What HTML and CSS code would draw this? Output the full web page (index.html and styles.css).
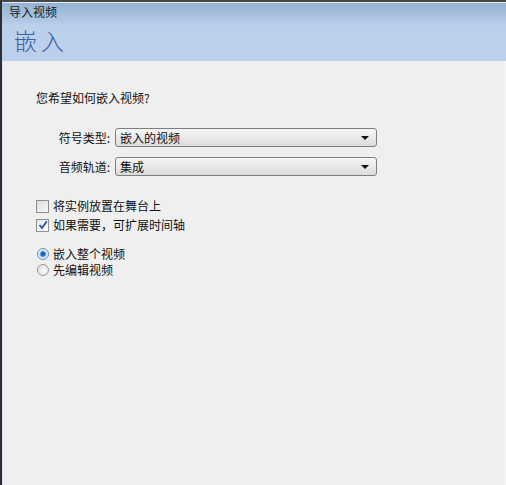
FILE: index.html
```html
<!DOCTYPE html>
<html lang="zh-CN">
<head>
<meta charset="utf-8">
<link rel="stylesheet" href="styles.css">
</head>
<body>
<div class="window">
  <div class="header">
    <div class="wintitle">导入视频</div>
    <div class="heading">嵌入</div>
  </div>
  <div class="content">
    <div class="question">您希望如何嵌入视频?</div>
    <div class="fields">
      <div class="field">
        <span class="label">符号类型:</span>
        <div class="select"><span>嵌入的视频</span><span class="arrow"></span></div>
      </div>
      <div class="field">
        <span class="label">音频轨道:</span>
        <div class="select"><span>集成</span><span class="arrow"></span></div>
      </div>
    </div>
    <div class="checks">
      <div class="opt"><span class="cb"></span><span>将实例放置在舞台上</span></div>
      <div class="opt"><span class="cb checked"><svg width="10" height="10" viewBox="0 0 10 10"><path d="M1.5 5 L4 8 L8.8 1.2" fill="none" stroke="#2a4fb8" stroke-width="1.8"/></svg></span><span>如果需要，可扩展时间轴</span></div>
    </div>
    <div class="radios">
      <div class="opt"><span class="rb on"></span><span>嵌入整个视频</span></div>
      <div class="opt"><span class="rb"></span><span>先编辑视频</span></div>
    </div>
  </div>
</div>
</body>
</html>
```

FILE: styles.css
```css
html, body { margin: 0; padding: 0; }
body {
  font-family: "Noto Sans CJK SC", "Noto Sans", sans-serif;
  font-size: 12px;
  color: #111;
  background: #efefef;
}
.window {
  width: 506px;
  height: 485px;
  box-sizing: border-box;
  border-top: 2px solid #474747;
  border-left: 2px solid #2e2e2e;
  background: #efefef;
  display: flex;
  flex-direction: column;
}
.header {
  height: 59px;
  box-sizing: border-box;
  border-top: 1px solid #e6ecf4;
  background: linear-gradient(#96b2d2 0px, #b3c9e5 19px, #bccfeb 22px, #bccfeb 100%);
  padding-left: 7px;
}
.wintitle {
  font-size: 12px;
  line-height: 16px;
  margin-top: 1px;
  color: #1a1a1a;
}
.heading {
  font-size: 23px;
  font-weight: 300;
  line-height: 30px;
  margin-top: 5px;
  margin-left: 5px;
  color: #3c62a4;
  letter-spacing: 4px;
}
.content {
  flex: 1;
  border-left: 1px solid #d6e2f2;
  border-right: 1px solid #fafafa;
  padding-left: 33px;
  padding-top: 29px;
}
.question { line-height: 16px; }
.fields {
  margin-top: 22px;
  margin-left: 16px;
  display: flex;
  flex-direction: column;
  gap: 10px;
}
.field { display: flex; align-items: center; gap: 5px; }
.label { width: 58px; text-align: right; line-height: 16px; }
.select {
  width: 262px;
  height: 19px;
  box-sizing: border-box;
  border: 1px solid #7f7f7f;
  border-radius: 3px;
  background: linear-gradient(#f6f6f6, #dcdcdc);
  display: flex;
  align-items: center;
  justify-content: space-between;
  padding: 0 7px 0 4px;
  line-height: 16px;
}
.arrow {
  width: 0; height: 0;
  border-left: 4px solid transparent;
  border-right: 4px solid transparent;
  border-top: 4px solid #111;
}
.checks {
  margin-top: 22px;
  display: flex;
  flex-direction: column;
  gap: 3px;
}
.radios {
  margin-top: 13px;
  display: flex;
  flex-direction: column;
  gap: 0px;
}
.opt { display: flex; align-items: center; gap: 4px; line-height: 16px; }
.cb {
  width: 13px; height: 13px;
  box-sizing: border-box;
  border: 1px solid #8e8f8f;
  background: linear-gradient(135deg, #dcdcdc, #f8f8f8);
  display: flex; align-items: center; justify-content: center;
}
.cb.checked { background: linear-gradient(135deg, #e6e6e6, #fdfdfd); }
.rb {
  width: 12px; height: 12px;
  box-sizing: border-box;
  border-radius: 50%;
  border: 1px solid #9a9a9a;
  background: radial-gradient(circle at 60% 60%, #fafafa, #dcdcdc);
  margin-left: 1px;
}
.rb.on {
  border-color: #6b8fb0;
  background: radial-gradient(circle, #0b3d8c 0, #2a7ad0 2px, #7fb8ea 3px, #eef4fa 4px, #d8e2ec 100%);
}
```
